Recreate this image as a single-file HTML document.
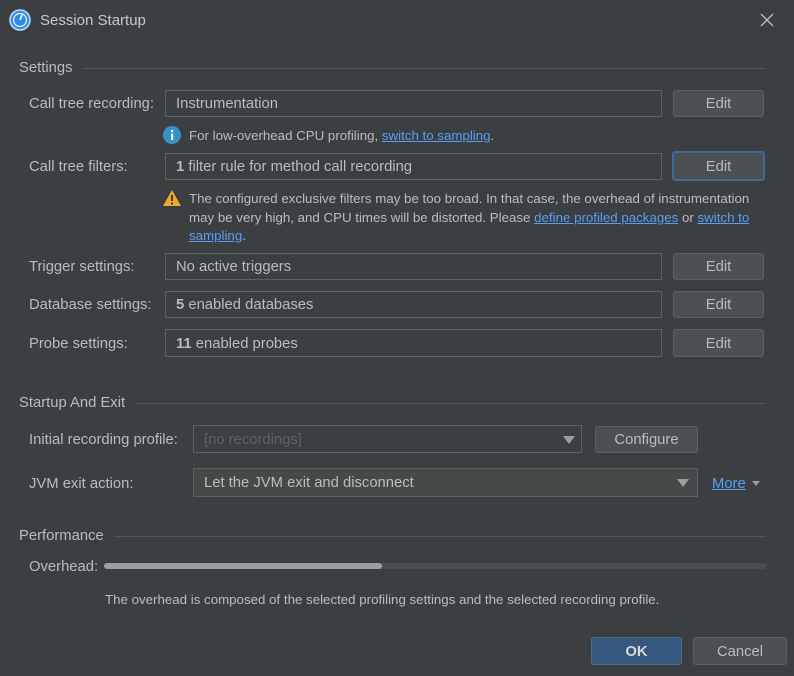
<!DOCTYPE html>
<html><head><style>
body{margin:0;width:794px;height:676px;background:#3c3f41;font-family:"Liberation Sans",sans-serif;color:#bbbbbb;position:relative;overflow:hidden;font-size:14.8px}
.a{position:absolute;white-space:nowrap}
.f{position:absolute;border:1px solid #5e6060;background:#3c3f41;box-sizing:border-box;padding-left:10px;line-height:26px}
.b{position:absolute;border:1px solid #5e6060;background:#4c5052;border-radius:3px;box-sizing:border-box;text-align:center;line-height:27px}
.h{position:absolute;left:19px;right:28px;display:flex;align-items:center}
.h span{margin-right:10px}.h i{flex:1;height:1px;background:#515456}
.s{font-size:13.3px}
a{color:#589df6;text-decoration:underline}
.arr{position:absolute;width:0;height:0;border-left:6px solid transparent;border-right:6px solid transparent;border-top:8px solid #9a9da0}
</style></head><body>
<svg class="a" style="left:9px;top:9px" width="22" height="22" viewBox="0 0 22 22"><circle cx="11" cy="11" r="10" fill="#2f8ae8" stroke="#bfe0ff" stroke-width="1.5"/><circle cx="11" cy="11" r="6.5" fill="none" stroke="#fff" stroke-width="1.2"/><path d="M11 11 L13 6" stroke="#fff" stroke-width="1.6"/></svg>
<div class="a" style="left:40px;top:12px;font-size:15px;color:#c8c8c8">Session Startup</div>
<svg class="a" style="left:760px;top:13px" width="14" height="14"><path d="M1 1L13 13M13 1L1 13" stroke="#bbb" stroke-width="1.4"/></svg>

<div class="h" style="top:60px"><span>Settings</span><i></i></div>
<div class="a" style="left:29px;top:96px">Call tree recording:</div>
<div class="f" style="left:165px;top:90px;width:497px;height:27px;line-height:27px">Instrumentation</div>
<div class="b" style="left:673px;top:90px;width:91px;height:27px">Edit</div>
<svg class="a" style="left:163px;top:126px" width="18" height="18"><circle cx="9" cy="9" r="9" fill="#3592c4"/><rect x="8" y="7.5" width="2.2" height="6.5" fill="#fff"/><rect x="8" y="4" width="2.2" height="2.2" fill="#fff"/></svg>
<div class="a s" style="left:189px;top:128px">For low-overhead CPU profiling, <a>switch to sampling</a>.</div>

<div class="a" style="left:29px;top:159px">Call tree filters:</div>
<div class="f" style="left:165px;top:153px;width:497px;height:27px;line-height:27px"><b>1</b> filter rule for method call recording</div>
<div class="b" style="left:672px;top:151px;width:93px;height:30px;border:2px solid #3d6a99;line-height:28px">Edit</div>
<svg class="a" style="left:162px;top:189px" width="20" height="18"><path d="M10 1L19 17H1Z" fill="#f0a732"/><rect x="9" y="6" width="2" height="6" fill="#3c3f41"/><rect x="9" y="13.5" width="2" height="2" fill="#3c3f41"/></svg>
<div class="a s" style="left:189px;top:190px;line-height:18.5px">The configured exclusive filters may be too broad. In that case, the overhead of instrumentation<br>may be very high, and CPU times will be distorted. Please <a>define profiled packages</a> or <a>switch to</a><br><a>sampling</a>.</div>

<div class="a" style="left:29px;top:259px">Trigger settings:</div>
<div class="f" style="left:165px;top:253px;width:497px;height:27px;line-height:27px">No active triggers</div>
<div class="b" style="left:673px;top:253px;width:91px;height:27px">Edit</div>
<div class="a" style="left:29px;top:297px">Database settings:</div>
<div class="f" style="left:165px;top:291px;width:497px;height:27px;line-height:27px"><b>5</b> enabled databases</div>
<div class="b" style="left:673px;top:291px;width:91px;height:27px">Edit</div>
<div class="a" style="left:29px;top:336px">Probe settings:</div>
<div class="f" style="left:165px;top:329px;width:497px;height:28px;line-height:28px"><b>11</b> enabled probes</div>
<div class="b" style="left:673px;top:329px;width:91px;height:28px;line-height:28px">Edit</div>

<div class="h" style="top:395px"><span>Startup And Exit</span><i></i></div>
<div class="a" style="left:29px;top:432px">Initial recording profile:</div>
<div class="f" style="left:193px;top:425px;width:389px;height:28px;line-height:28px;color:#5f6263">[no recordings]</div>
<div class="arr" style="left:563px;top:436px"></div>
<div class="b" style="left:595px;top:426px;width:103px;height:27px">Configure</div>
<div class="a" style="left:29px;top:476px">JVM exit action:</div>
<div class="f" style="left:193px;top:468px;width:505px;height:29px;line-height:29px;background:#45494a">Let the JVM exit and disconnect</div>
<div class="arr" style="left:677px;top:479px"></div>
<div class="a" style="left:712px;top:476px"><a>More</a></div>
<div class="arr" style="left:752px;top:481px;border-left-width:4px;border-right-width:4px;border-top-width:5px"></div>

<div class="h" style="top:528px"><span>Performance</span><i></i></div>
<div class="a" style="left:29px;top:559px">Overhead:</div>
<div class="a" style="left:104px;top:563px;width:663px;height:6px;background:#4b4e50;border-radius:3px"></div>
<div class="a" style="left:104px;top:563px;width:278px;height:6px;background:#9c9e9f;border-radius:3px"></div>
<div class="a s" style="left:105px;top:592px">The overhead is composed of the selected profiling settings and the selected recording profile.</div>

<div class="b" style="left:591px;top:637px;width:91px;height:28px;line-height:28px;background:#365880;border-color:#4c708c;color:#d8d8d8;font-weight:bold">OK</div>
<div class="b" style="left:693px;top:637px;width:94px;height:28px;line-height:28px">Cancel</div>
</body></html>
